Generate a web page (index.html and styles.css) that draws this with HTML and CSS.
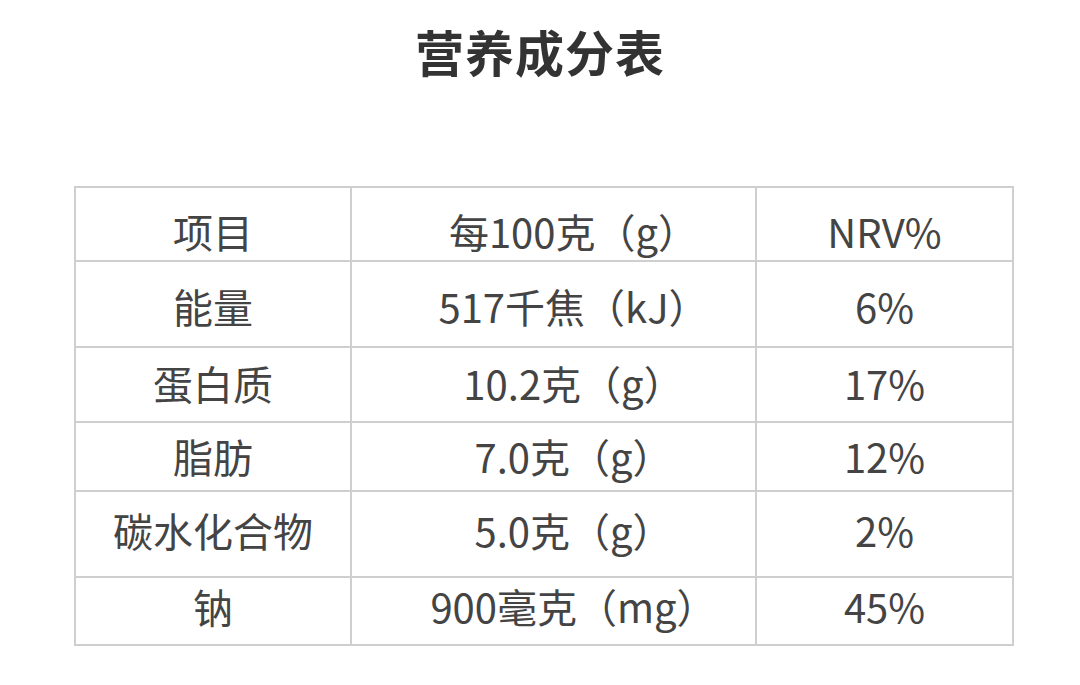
FILE: index.html
```html
<!DOCTYPE html>
<html lang="zh-CN">
<head>
<meta charset="utf-8">
<title>营养成分表</title>
<link rel="stylesheet" href="styles.css">
</head>
<body>
<div class="page">
  <h1 class="title">营养成分表</h1>
  <div class="table-wrap">
    <table class="nutrition">
      <colgroup>
        <col class="c1"><col class="c2"><col class="c3">
      </colgroup>
      <tr class="r1"><td>项目</td><td class="amount">每100克（g）</td><td>NRV%</td></tr>
      <tr class="r2"><td>能量</td><td class="amount">517千焦（kJ）</td><td>6%</td></tr>
      <tr class="r3"><td>蛋白质</td><td class="amount">10.2克（g）</td><td>17%</td></tr>
      <tr class="r4"><td>脂肪</td><td class="amount">7.0克（g）</td><td>12%</td></tr>
      <tr class="r5"><td>碳水化合物</td><td class="amount">5.0克（g）</td><td>2%</td></tr>
      <tr class="r6"><td>钠</td><td class="amount">900毫克（mg）</td><td>45%</td></tr>
    </table>
  </div>
</div>
</body>
</html>
```

FILE: styles.css
```css
html, body {
  margin: 0;
  padding: 0;
  background: #ffffff;
}
body {
  font-family: "Noto Sans CJK SC", "Noto Sans", sans-serif;
  color: #3a3a3a;
}
.page {
  width: 1080px;
  height: 685px;
  overflow: hidden;
}
.title {
  margin: 0;
  padding-top: 20px;
  height: 186px;
  box-sizing: border-box;
  text-align: center;
  font-size: 49px;
  line-height: 62px;
  font-weight: 700;
  color: #333333;
  letter-spacing: 1px;
}
.table-wrap {
  padding-left: 74px;
}
.nutrition {
  border-collapse: collapse;
  width: 938px;
  table-layout: fixed;
}
.nutrition col.c1 { width: 276px; }
.nutrition col.c2 { width: 405px; }
.nutrition col.c3 { width: 257px; }
.nutrition td {
  border: 2px solid #cfcfcf;
  text-align: center;
  vertical-align: middle;
  font-size: 40px;
  line-height: 1;
  padding: 0;
  color: #444444;
}
.nutrition td.amount {
  padding-left: 40px;
}
.nutrition tr.r1 { height: 74px; }
.nutrition tr.r2 { height: 86px; }
.nutrition tr.r3 { height: 75px; }
.nutrition tr.r4 { height: 69px; }
.nutrition tr.r5 { height: 86px; }
.nutrition tr.r6 { height: 68px; }
.nutrition tr.r1 td { padding-top: 14px; }
.nutrition tr.r2 td { padding-top: 4px; }
.nutrition tr.r3 td { padding-bottom: 4px; }
.nutrition tr.r4 td { padding-bottom: 2px; }
.nutrition tr.r5 td { padding-bottom: 8px; }
.nutrition tr.r6 td { padding-bottom: 10px; }
```
